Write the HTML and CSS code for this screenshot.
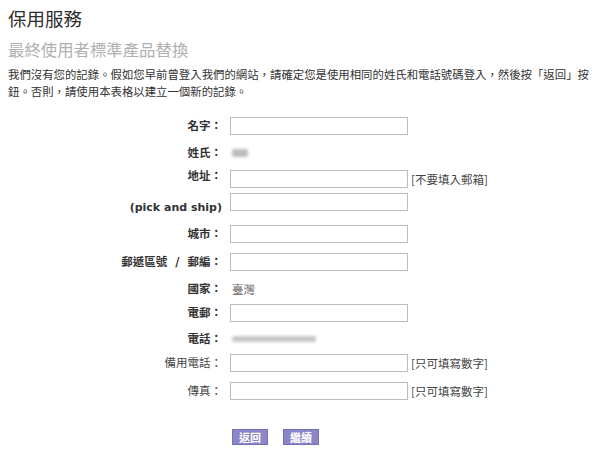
FILE: index.html
```html
<!DOCTYPE html>
<html lang="zh-Hant">
<head>
<meta charset="utf-8">
<title>保用服務</title>
<link rel="stylesheet" href="styles.css">
</head>
<body>
<div class="page">
  <h1 class="title">保用服務</h1>
  <h2 class="subtitle">最終使用者標準產品替換</h2>
  <p class="intro">我們沒有您的記錄。假如您早前曾登入我們的網站，請確定您是使用相同的姓氏和電話號碼登入，然後按「返回」按鈕。否則，請使用本表格以建立一個新的記錄。</p>

  <form class="form">
    <div class="row">
      <label class="label">名字：</label>
      <input class="field" type="text">
    </div>
    <div class="row row--gap9">
      <span class="label">姓氏：</span>
      <span class="value"><span class="blur blur--short"></span></span>
    </div>
    <div class="row row--gap8">
      <label class="label label--top">地址：</label>
      <input class="field" type="text">
      <span class="note">[不要填入郵箱]</span>
    </div>
    <div class="row row--gap5">
      <label class="label label--bottom">(pick and ship)</label>
      <input class="field" type="text">
    </div>
    <div class="row row--gap14">
      <label class="label">城市：</label>
      <input class="field" type="text">
    </div>
    <div class="row row--gap10">
      <label class="label">郵遞區號&nbsp; / &nbsp;郵編：</label>
      <input class="field" type="text">
    </div>
    <div class="row row--gap9">
      <span class="label">國家：</span>
      <span class="value">臺灣</span>
    </div>
    <div class="row row--gap6">
      <label class="label">電郵：</label>
      <input class="field" type="text">
    </div>
    <div class="row row--gap8">
      <span class="label">電話：</span>
      <span class="value"><span class="blur blur--long"></span></span>
    </div>
    <div class="row row--gap6">
      <label class="label label--normal">備用電話：</label>
      <input class="field" type="text">
      <span class="note">[只可填寫數字]</span>
    </div>
    <div class="row row--gap10">
      <label class="label label--normal">傳真：</label>
      <input class="field" type="text">
      <span class="note">[只可填寫數字]</span>
    </div>
    <div class="row row--buttons">
      <span class="label"></span>
      <div class="buttons">
        <button class="btn" type="button">返回</button>
        <button class="btn" type="button">繼續</button>
      </div>
    </div>
  </form>
</div>
</body>
</html>
```

FILE: styles.css
```css
* { box-sizing: border-box; }

html, body {
  margin: 0;
  background: #ffffff;
}

body {
  font-family: "DejaVu Sans", "Noto Sans CJK TC", sans-serif;
  color: #333333;
}

.page {
  padding: 6px 8px 0 8px;
}

.title {
  margin: 0;
  font-family: "Noto Sans CJK TC", sans-serif;
  font-size: 18.5px;
  line-height: 24px;
  font-weight: normal;
  color: #2e2e2e;
}

.subtitle {
  margin: 8px 0 0 0;
  font-family: "Noto Sans CJK TC", sans-serif;
  font-size: 16.4px;
  line-height: 22px;
  font-weight: normal;
  color: #b0b0b0;
}

.intro {
  margin: 6px 0 0 0;
  font-family: "Noto Sans CJK TC", sans-serif;
  font-size: 11.4px;
  line-height: 17px;
  color: #333333;
}

.form {
  margin-top: 17px;
  display: flex;
  flex-direction: column;
}

.row {
  display: grid;
  grid-template-columns: 214px 181px auto;
  column-gap: 8px;
  align-items: center;
  height: 18px;
}

.row--gap5 { margin-top: 5px; }
.row--gap6 { margin-top: 6px; }
.row--gap8 { margin-top: 8px; }
.row--gap9 { margin-top: 9px; }
.row--gap10 { margin-top: 10px; }
.row--gap14 { margin-top: 14px; }
.row--buttons { margin-top: 29px; height: 16px; }

.label {
  text-align: right;
  font-size: 11.5px;
  line-height: 14px;
  font-weight: bold;
  color: #333333;
  white-space: nowrap;
}

.label--normal {
  font-weight: normal;
  color: #444444;
}

.label--top {
  align-self: start;
  line-height: 12px;
}

.label--bottom {
  align-self: end;
  margin-bottom: -4px;
  font-size: 11px;
}

.field {
  width: 178px;
  height: 18px;
  margin: 0;
  padding: 0 2px;
  border: 1px solid #bcbcbc;
  background: #ffffff;
  font-size: 11px;
}

.value {
  padding-left: 2px;
  font-family: "Noto Sans CJK TC", sans-serif;
  font-size: 11.5px;
  line-height: 14px;
  color: #666666;
  display: flex;
  align-items: center;
}

.blur {
  display: inline-block;
  background: #bdbdbd;
  filter: blur(1.6px);
  border-radius: 2px;
}

.blur--short { width: 16px; height: 8px; }
.blur--long { width: 84px; height: 6px; background: #c6c6c6; }

.note {
  margin-left: -8px;
  font-family: "Noto Sans CJK TC", sans-serif;
  font-size: 11.5px;
  line-height: 14px;
  color: #444444;
  white-space: nowrap;
}

.buttons {
  display: flex;
  gap: 15px;
  padding-left: 2px;
}

.btn {
  width: 36px;
  height: 16px;
  margin: 0;
  padding: 0;
  border: 1px solid #7570b5;
  background: #8b86c8;
  color: #ffffff;
  font-family: "Noto Sans CJK TC", sans-serif;
  font-size: 11px;
  font-weight: bold;
  line-height: 14px;
}
```
